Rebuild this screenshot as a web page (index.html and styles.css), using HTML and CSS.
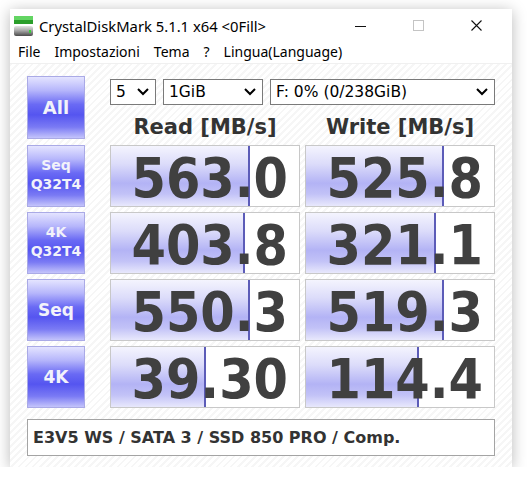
FILE: index.html
```html
<!DOCTYPE html>
<html lang="it">
<head>
    <meta charset="UTF-8">
    <meta name="viewport" content="width=device-width, initial-scale=1.0">
    <title>CrystalDiskMark 5.1.1 x64</title>
    <link rel="stylesheet" href="styles.css">
</head>
<body>
    <div class="window">
        <div class="titlebar">
            <svg class="app-icon" width="20" height="21" viewBox="0 0 20 21">
                <rect x="0" y="0" width="19" height="4" fill="#63d563"/>
                <rect x="0" y="4" width="19" height="4" fill="#2b9e2b"/>
                <defs>
                    <linearGradient id="drive" x1="0" y1="0" x2="0" y2="1">
                        <stop offset="0" stop-color="#e4e4e4"/>
                        <stop offset="0.45" stop-color="#a8a8a8"/>
                        <stop offset="1" stop-color="#4a4a4a"/>
                    </linearGradient>
                </defs>
                <rect x="0" y="10" width="19" height="10" rx="2" fill="url(#drive)"/>
                <rect x="15" y="14" width="2" height="3" fill="#3ccf3c"/>
            </svg>
            <span class="title">CrystalDiskMark 5.1.1 x64 &lt;0Fill&gt;</span>
            <div class="controls">
                <span class="ctl"><svg width="11" height="11" viewBox="0 0 11 11"><line x1="0" y1="6.5" x2="11" y2="6.5" stroke="#111" stroke-width="1"/></svg></span>
                <span class="ctl"><svg width="11" height="11" viewBox="0 0 11 11"><rect x="0.5" y="0.5" width="10" height="10" fill="none" stroke="#c4c4c4" stroke-width="1"/></svg></span>
                <span class="ctl"><svg width="11" height="11" viewBox="0 0 11 11"><path d="M0.5 0.5 L10.5 10.5 M10.5 0.5 L0.5 10.5" stroke="#111" stroke-width="1.1"/></svg></span>
            </div>
        </div>

        <div class="menubar">
            <span>File</span>
            <span>Impostazioni</span>
            <span>Tema</span>
            <span>?</span>
            <span>Lingua(Language)</span>
        </div>

        <div class="content">
            <div class="board">
                <div class="btn all">All</div>
                <div class="head">
                    <div class="combos">
                        <div class="combo count">5<svg class="chev" width="12" height="8" viewBox="0 0 12 8"><polyline points="1,1 6,6 11,1" fill="none" stroke="#000" stroke-width="2"/></svg></div>
                        <div class="combo size">1GiB<svg class="chev" width="12" height="8" viewBox="0 0 12 8"><polyline points="1,1 6,6 11,1" fill="none" stroke="#000" stroke-width="2"/></svg></div>
                        <div class="combo drive">F: 0% (0/238GiB)<svg class="chev" width="12" height="8" viewBox="0 0 12 8"><polyline points="1,1 6,6 11,1" fill="none" stroke="#000" stroke-width="2"/></svg></div>
                    </div>
                    <div class="cols">
                        <div>Read [MB/s]</div>
                        <div>Write [MB/s]</div>
                    </div>
                </div>

                <div class="btn two"><span>Seq</span><span>Q32T4</span></div>
                <div class="cell" style="--w:139px">563.0</div>
                <div class="cell" style="--w:138px">525.8</div>

                <div class="btn two"><span>4K</span><span>Q32T4</span></div>
                <div class="cell" style="--w:134px">403.8</div>
                <div class="cell" style="--w:130px">321.1</div>

                <div class="btn one">Seq</div>
                <div class="cell" style="--w:139px">550.3</div>
                <div class="cell" style="--w:138px">519.3</div>

                <div class="btn one">4K</div>
                <div class="cell" style="--w:95px">39.30</div>
                <div class="cell" style="--w:113px">114.4</div>
            </div>

            <div class="comment">E3V5 WS / SATA 3 / SSD 850 PRO / Comp.</div>
        </div>
    </div>
</body>
</html>
```

FILE: styles.css
```css
body {
    margin: 0;
    background: #ffffff;
    font-family: "Noto Sans", sans-serif;
}
.window {
    margin: 9px 0 0 10px;
    width: 502px;
    height: 458px;
    background: #fff;
    box-shadow: 0 2px 14px rgba(0, 0, 0, 0.28);
    display: flex;
    flex-direction: column;
}
.titlebar {
    height: 31px;
    display: flex;
    align-items: center;
    padding-left: 4px;
    padding-right: 7px;
}
.app-icon {
    margin-top: 4px;
}
.title {
    margin-left: 5px;
    font-size: 14.8px;
    color: #000;
    flex: 1;
    padding-top: 2px;
}
.controls {
    display: flex;
    height: 100%;
}
.ctl {
    width: 58px;
    display: flex;
    align-items: center;
    justify-content: center;
    padding-top: 1px;
}
.menubar {
    height: 23px;
    display: flex;
    align-items: center;
    padding-left: 1px;
    font-size: 14px;
    color: #000;
    border-bottom: 1px solid #f0f0f0;
}
.menubar span {
    padding: 0 7px;
}
.content {
    flex: 1;
    padding: 12px 17px 0;
    background: repeating-linear-gradient(-45deg, #ffffff 0, #ffffff 3px, #f6f6f6 3px, #f6f6f6 5px);
}
.board {
    display: grid;
    grid-template-columns: 78px 190px 190px;
    grid-template-rows: 64px repeat(4, 62px);
    column-gap: 5px;
    row-gap: 5px;
}
.btn {
    width: 58px;
    box-sizing: border-box;
    border: 1px solid #aaaae6;
    background: linear-gradient(#e4e4ff 0%, #b6b6fb 22%, #6a6af4 45%, #5555f0 62%, #7a7af4 82%, #c4c4fb 100%);
    color: #f2f2fa;
    font-family: "DejaVu Sans", sans-serif;
    font-weight: bold;
    display: flex;
    flex-direction: column;
    align-items: center;
    justify-content: center;
}
.all {
    height: 63px;
    font-size: 18px;
}
.one {
    font-size: 17px;
}
.two {
    font-size: 14px;
    line-height: 19px;
    padding-bottom: 2px;
}
.head {
    grid-column: 2 / 4;
    display: flex;
    flex-direction: column;
}
.combos {
    display: flex;
    gap: 7px;
    margin-top: 3px;
}
.combo {
    height: 26px;
    box-sizing: border-box;
    border: 1px solid #7a7a7a;
    background: #fff;
    display: flex;
    align-items: center;
    justify-content: space-between;
    padding: 0 6px 0 5px;
    font-family: "DejaVu Sans", sans-serif;
    font-size: 15.5px;
    color: #000;
}
.count {
    width: 46px;
}
.size {
    width: 100px;
}
.drive {
    width: 225px;
}
.cols {
    display: grid;
    grid-template-columns: 190px 190px;
    column-gap: 5px;
    margin-top: 10px;
    font-family: "DejaVu Sans", sans-serif;
    font-weight: bold;
    font-size: 21px;
    line-height: 24px;
    color: #333;
    text-align: center;
}
.cell {
    box-sizing: border-box;
    border: 1px solid #c8c8c8;
    background:
        linear-gradient(#5c5cb8, #5c5cb8) no-repeat calc(var(--w) - 2px) 0 / 2px 100%,
        linear-gradient(#f4f4fe 0%, #dcdcfa 30%, #b3b3f5 62%, #c2c2f7 80%, #e8e8fc 100%) no-repeat 0 0 / var(--w) 100%,
        #fff;
    font-family: "DejaVu Sans", sans-serif;
    font-stretch: condensed;
    font-weight: bold;
    font-size: 55px;
    line-height: 60px;
    padding-top: 2px;
    color: #404040;
    text-align: right;
    padding-right: 11px;
}
.comment {
    margin-top: 11px;
    height: 37px;
    box-sizing: border-box;
    border: 1px solid #a4a4a4;
    background: #fff;
    display: flex;
    align-items: center;
    padding-left: 5px;
    font-family: "DejaVu Sans", sans-serif;
    font-weight: bold;
    font-size: 16px;
    color: #333;
}
```
